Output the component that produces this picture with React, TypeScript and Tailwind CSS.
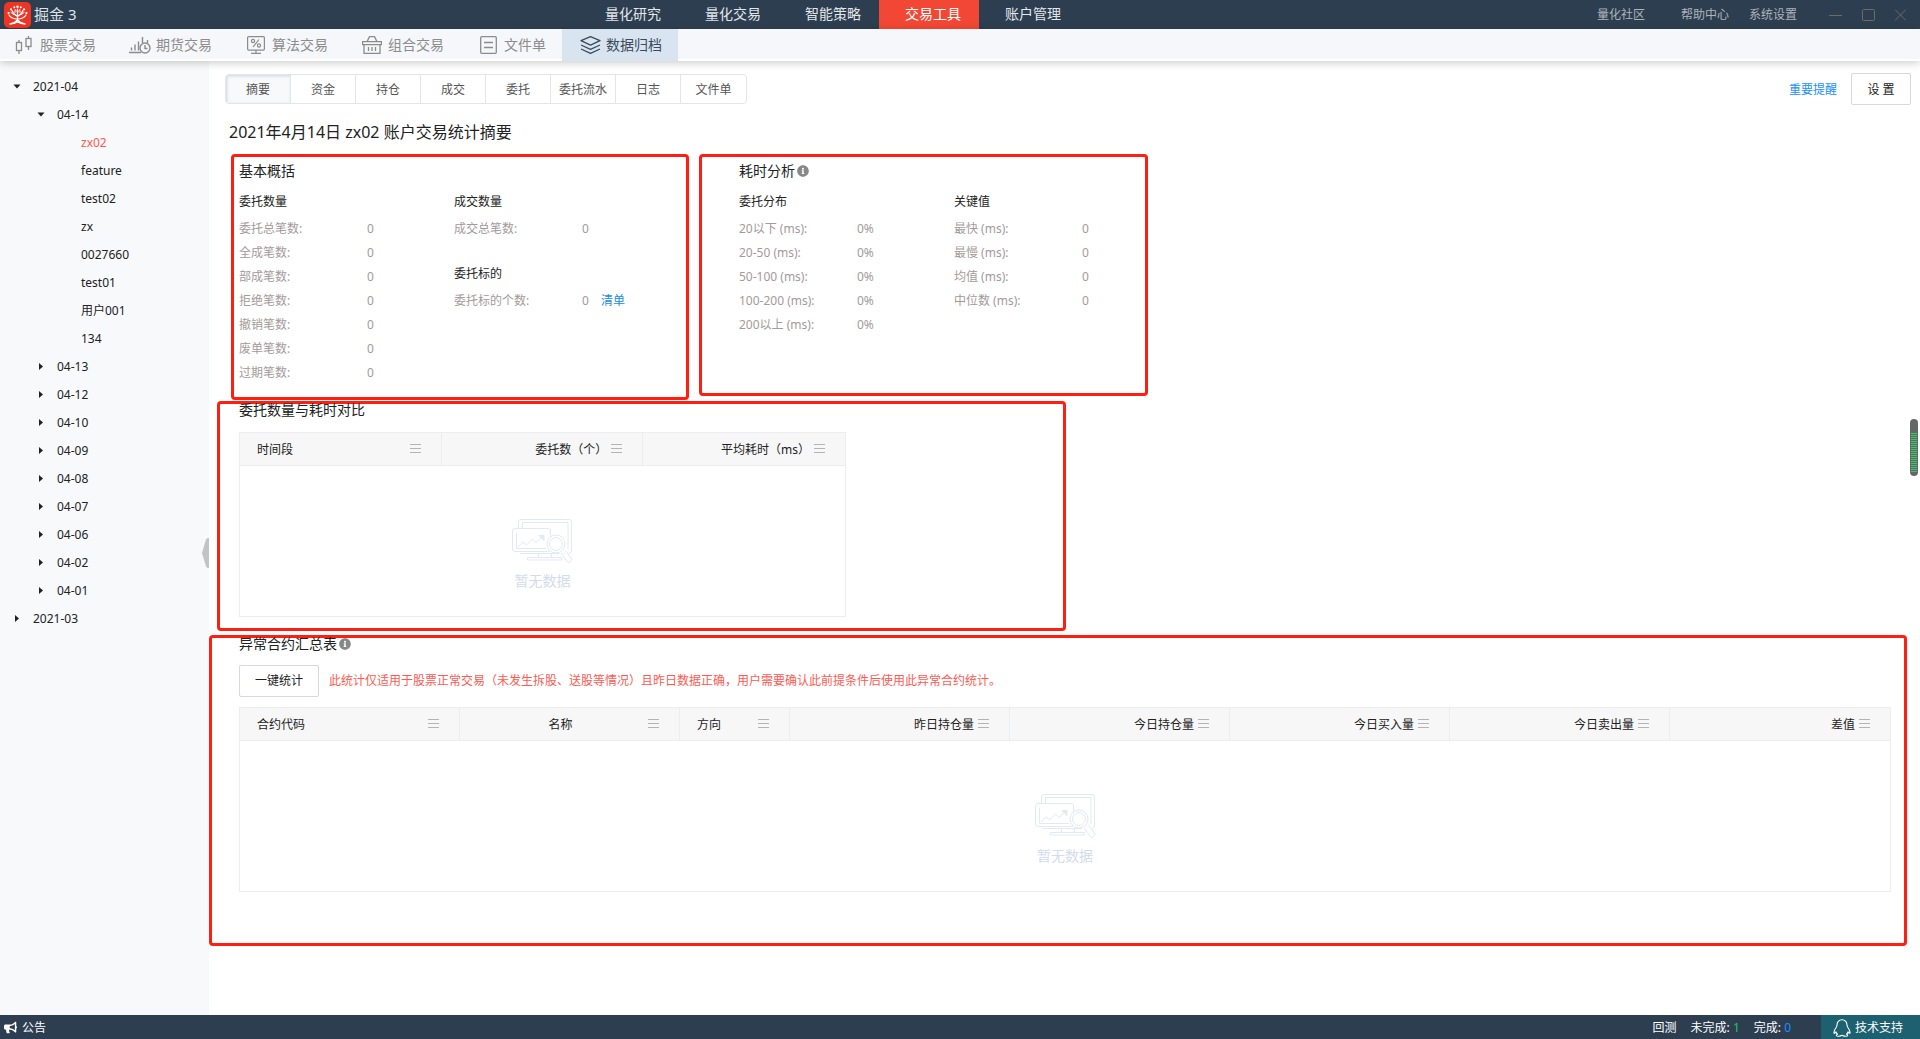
import { useState, type ReactNode } from "react";
import { FaBullhorn, FaInfoCircle } from "react-icons/fa";

// Datos

const MAIN_NAV = ["量化研究", "量化交易", "智能策略", "交易工具", "账户管理"];

const TABS = ["摘要", "资金", "持仓", "成交", "委托", "委托流水", "日志", "文件单"];

interface TreeNode {
  label: string;
  depth: number;
  state?: "open" | "closed";
  selected?: boolean;
}

const TREE: TreeNode[] = [
  { label: "2021-04", depth: 0, state: "open" },
  { label: "04-14", depth: 1, state: "open" },
  { label: "zx02", depth: 2, selected: true },
  { label: "feature", depth: 2 },
  { label: "test02", depth: 2 },
  { label: "zx", depth: 2 },
  { label: "0027660", depth: 2 },
  { label: "test01", depth: 2 },
  { label: "用户001", depth: 2 },
  { label: "134", depth: 2 },
  { label: "04-13", depth: 1, state: "closed" },
  { label: "04-12", depth: 1, state: "closed" },
  { label: "04-10", depth: 1, state: "closed" },
  { label: "04-09", depth: 1, state: "closed" },
  { label: "04-08", depth: 1, state: "closed" },
  { label: "04-07", depth: 1, state: "closed" },
  { label: "04-06", depth: 1, state: "closed" },
  { label: "04-02", depth: 1, state: "closed" },
  { label: "04-01", depth: 1, state: "closed" },
  { label: "2021-03", depth: 0, state: "closed" },
];

const TREE_INDENT = ["pl-[11px]", "pl-[35px]", "pl-[59px]"];

const ORDER_COUNTS = [
  "委托总笔数:",
  "全成笔数:",
  "部成笔数:",
  "拒绝笔数:",
  "撤销笔数:",
  "废单笔数:",
  "过期笔数:",
];

const LATENCY_BUCKETS = [
  "20以下 (ms):",
  "20-50 (ms):",
  "50-100 (ms):",
  "100-200 (ms):",
  "200以上 (ms):",
];

const KEY_VALUES = ["最快 (ms):", "最慢 (ms):", "均值 (ms):", "中位数 (ms):"];

interface Column {
  label: string;
  width: string;
  align: string;
}

const COMPARE_COLUMNS: Column[] = [
  { label: "时间段", width: "w-1/3", align: "text-left" },
  { label: "委托数（个）", width: "w-1/3", align: "text-right" },
  { label: "平均耗时（ms）", width: "w-1/3", align: "text-right" },
];

const ABNORMAL_COLUMNS: Column[] = [
  { label: "合约代码", width: "w-2/15", align: "text-left" },
  { label: "名称", width: "w-2/15", align: "text-center" },
  { label: "方向", width: "w-1/15", align: "text-left" },
  { label: "昨日持仓量", width: "w-2/15", align: "text-right" },
  { label: "今日持仓量", width: "w-2/15", align: "text-right" },
  { label: "今日买入量", width: "w-2/15", align: "text-right" },
  { label: "今日卖出量", width: "w-2/15", align: "text-right" },
  { label: "差值", width: "w-2/15", align: "text-right" },
];

// Iconos

function Logo() {
  return (
    <svg width="27" height="26" viewBox="0 0 27 26" fill="none" stroke="#fff" strokeLinecap="round">
      <rect width="27" height="26" rx="5" fill="#ee3524" stroke="none" />
      <path d="M13.500 7v11M13.500 17C10 17 6.500 15.500 5 13M13.500 17c3.500 0 7-1.500 8.500-4M13.500 14.500C10.500 13 8.800 11 8 8.500M13.500 14.500c3-1.500 4.700-3.500 5.500-6" strokeWidth="1.200" />
      <path d="M9.500 12.500 7 10.500M17.500 12.500l2.500-2M11 10.500l.2-3M16 10.500l-.2-3M13.500 10l-1.500-1.500M13.500 10l1.500-1.500" strokeWidth="0.900" />
      <path d="M6 22c3-.5 5.500-1.500 7.500-4 2 2.500 4.500 3.500 7.500 4M10 21.500l3.500-1.500 3.500 1.500" strokeWidth="1.300" />
      <g fill="#fff" stroke="none">
        <circle cx="13.500" cy="4.800" r="1.200" />
        <circle cx="10.300" cy="5.300" r="1" />
        <circle cx="16.700" cy="5.300" r="1" />
        <circle cx="7" cy="7.300" r="1.100" />
        <circle cx="20" cy="7.300" r="1.100" />
        <circle cx="4.600" cy="11" r="1.100" />
        <circle cx="22.400" cy="11" r="1.100" />
      </g>
    </svg>
  );
}

function CandleIcon() {
  return (
    <svg width="18" height="18" viewBox="0 0 18 18" fill="none" stroke="currentColor" strokeWidth="1.300">
      <rect x="1.500" y="6.500" width="5" height="8" />
      <path d="M4 4v2.500M4 14.500V18M13.500 0v2.500M13.500 10.500V14" />
      <rect x="11" y="2.500" width="5" height="8" />
    </svg>
  );
}

function FuturesIcon() {
  return (
    <svg width="22" height="18" viewBox="0 0 22 18" fill="none" stroke="currentColor" strokeWidth="1.400">
      <path d="M0 16.500h12M2.500 11.500v3M6 8.500v6M9.500 5.500v9M13.500 1v6" />
      <circle cx="16" cy="12" r="5" />
      <path d="M16 9v3.500h2.500M18.500 4v3.500" />
    </svg>
  );
}

function AlgoIcon() {
  return (
    <svg width="18" height="18" viewBox="0 0 18 18" fill="none" stroke="currentColor" strokeWidth="1.200">
      <rect x="0.600" y="0.600" width="16.800" height="13.500" rx="1" />
      <circle cx="6" cy="5" r="1.600" />
      <circle cx="12" cy="9.500" r="1.600" />
      <path d="m12 3.500-6 7.500M9 14v3M4 17.300h10" />
    </svg>
  );
}

function BasketIcon() {
  return (
    <svg width="20" height="18" viewBox="0 0 20 18" fill="none" stroke="currentColor" strokeWidth="1.300">
      <path d="M.6 5.600h18.800v3H.6zM2 8.600v8.700h16V8.600M5 5.600 7.500.7h5L15 5.600M6.500 11v4M10 11v4M13.500 11v4" />
    </svg>
  );
}

function FileIcon() {
  return (
    <svg width="17" height="18" viewBox="0 0 17 18" fill="none" stroke="currentColor" strokeWidth="1.300">
      <rect x="0.700" y="0.700" width="15.600" height="16.600" rx="1" />
      <path d="M4 6.500h9M4 11.500h9" />
    </svg>
  );
}

function LayersIcon() {
  return (
    <svg width="21" height="18" viewBox="0 0 21 18" fill="none" stroke="currentColor" strokeWidth="1.300" strokeLinejoin="round">
      <path d="m10.500.7 9.500 4-9.500 4.500L1 4.700zM1 9l9.500 4.300L20 9M1 13l9.500 4.300L20 13" />
    </svg>
  );
}

function PenguinIcon() {
  return (
    <svg width="18" height="18" viewBox="0 0 18 18" fill="none" stroke="currentColor" strokeWidth="1.100" strokeLinejoin="round">
      <path d="M9 .8C5.800.8 4 3 4 6c0 1-.3 1.600-.9 2.500C1.800 10.300.9 12 .9 13.600c0 1.100.8 1.100 2.100-.7.300 1 .8 1.700 1.500 2.300-1 .4-1.300.9-1.100 1.400.3.900 4 .8 5.600-.3 1.600 1.100 5.300 1.200 5.600.3.200-.5-.1-1-1.100-1.400.7-.6 1.200-1.300 1.500-2.300 1.300 1.800 2.100 1.800 2.100.7 0-1.600-.9-3.300-2.200-5.100C14.300 7.600 14 7 14 6c0-3-1.800-5.200-5-5.200z" />
    </svg>
  );
}

function MenuIcon() {
  return (
    <svg className="mb-[2px] shrink-0" width="11" height="9" viewBox="0 0 11 9" fill="#b4b4b4">
      <path d="M0 0h11v1H0zM0 4h11v1H0zM0 8h11v1H0z" />
    </svg>
  );
}

function EmptyIcon() {
  return (
    <svg width="61" height="44" viewBox="0 0 61 44" fill="none" stroke="#e3e9f2">
      <path d="M6.500 9V3a2.500 2.500 0 0 1 2.500-2.500h48A2.500 2.500 0 0 1 59.500 3v29a2.500 2.500 0 0 1-2.500 2.500" />
      <path d="M10.500 9V3.500h45.500V30M8 34.500h39" />
      <rect x="0.500" y="9.500" width="38" height="23" rx="2.500" />
      <path d="M4.500 14v15.500H34M6 28l5-5 3.500 3 6-6 3.500 3.500 7-6.500" />
      <path d="M27 16.500h5v5z" fill="#e3e9f2" />
      <circle cx="44" cy="25" r="9" fill="#fff" />
      <circle cx="44" cy="25" r="6.500" />
      <path d="m49 34 6.500 9 2 .5 2.500-3.500-6.500-8.500M26.500 34.500v4M39.500 34.500v4M15.500 38.500h34v2.500h-34z" />
    </svg>
  );
}

const TOOLS: { label: string; icon: ReactNode; active?: boolean }[] = [
  { label: "股票交易", icon: <CandleIcon /> },
  { label: "期货交易", icon: <FuturesIcon /> },
  { label: "算法交易", icon: <AlgoIcon /> },
  { label: "组合交易", icon: <BasketIcon /> },
  { label: "文件单", icon: <FileIcon /> },
  { label: "数据归档", icon: <LayersIcon />, active: true },
];

// Cabecera

function Header() {
  return (
    <header className="flex h-[29px] shrink-0 items-center bg-[#2d3e50] text-sm text-[#e3e6ea]">
      <div className="flex w-[579px] shrink-0 items-center gap-[3px] pl-1 text-[15px] text-[#dfe3e7]">
        <Logo />
        <span>掘金 3</span>
      </div>
      <nav className="flex h-full">
        {MAIN_NAV.map((item) => (
          <button
            key={item}
            type="button"
            className={
              item === "交易工具"
                ? "w-[100px] bg-[#f24734] pb-[2px] pl-2 text-white"
                : "w-[100px] pb-[2px] pl-2"
            }
          >
            {item}
          </button>
        ))}
      </nav>
      <div className="ml-auto flex items-center pr-[14px] text-xs text-[#adb4bb]">
        <a href="#community" className="mr-9">量化社区</a>
        <a href="#help" className="mr-5">帮助中心</a>
        <a href="#settings" className="mr-8">系统设置</a>
        <div className="flex items-center gap-5 text-[#6b6b6b]">
          <button type="button" aria-label="minimize">
            <svg width="13" height="12" viewBox="0 0 13 12" stroke="currentColor">
              <path d="M0 6.500h13" />
            </svg>
          </button>
          <button type="button" aria-label="maximize">
            <svg width="13" height="12" viewBox="0 0 13 12" fill="none" stroke="currentColor">
              <rect x="0.500" y="0.500" width="12" height="11" rx="1" />
            </svg>
          </button>
          <button type="button" aria-label="close">
            <svg width="11" height="12" viewBox="0 0 11 12" stroke="currentColor">
              <path d="m0 .5 11 11M11 .5l-11 11" />
            </svg>
          </button>
        </div>
      </div>
    </header>
  );
}

function Toolbar() {
  return (
    <nav className="relative z-10 flex h-8 shrink-0 bg-[#f6f7fa] text-sm text-[#8c8c8c] shadow-[inset_0_-2px_0_#fff,0_2px_8px_rgba(0,0,0,0.2)]">
      {TOOLS.map((tool) => (
        <button
          key={tool.label}
          type="button"
          className={
            tool.active
              ? "flex items-center gap-1 bg-[#d8e4f0] px-4 text-[#3b4a5c]"
              : "flex items-center gap-1 px-4 first:pl-3"
          }
        >
          <span className="flex w-6 justify-center">{tool.icon}</span>
          {tool.label}
        </button>
      ))}
    </nav>
  );
}

function Sidebar() {
  return (
    <aside className="relative w-[209px] shrink-0 bg-[#f7f9fb] pt-3 text-xs text-[#222]">
      <ul>
        {TREE.map((node) => (
          <li key={node.label}>
            <button
              type="button"
              className={`flex h-7 w-full items-center gap-[10px] text-left ${TREE_INDENT[node.depth]} ${
                node.selected ? "text-[#ff5a52]" : ""
              }`}
            >
              <svg width="12" height="8" viewBox="0 0 12 8" fill="#222">
                {node.state === "open" && <path d="M2.500 1.500h7L6 5.500z" />}
                {node.state === "closed" && <path d="M4 0 8 3.500 4 7z" />}
              </svg>
              {node.label}
            </button>
          </li>
        ))}
      </ul>
      <button type="button" aria-label="collapse" className="absolute top-1/2 right-0">
        <svg width="7" height="30" viewBox="0 0 7 30" fill="#c3c3c3">
          <path d="M7 0H5.500L4 1.500 0 15l4 13.500L5.500 30H7z" />
        </svg>
      </button>
    </aside>
  );
}

// Bloques del resumen

interface StatListProps {
  title: string;
  labels: string[];
  value: string;
  labelWidth?: string;
  extra?: ReactNode;
}

function StatList({ title, labels, value, labelWidth = "w-32", extra }: StatListProps) {
  return (
    <div>
      <h3 className="mb-[2px] leading-[26px] text-[#222]">{title}</h3>
      <dl className="text-[#a39a9a]">
        {labels.map((label) => (
          <div key={label} className="flex h-6 items-center">
            <dt className={labelWidth}>{label}</dt>
            <dd>{value}</dd>
            {extra}
          </div>
        ))}
      </dl>
    </div>
  );
}

function EmptyTable({ columns }: { columns: Column[] }) {
  return (
    <div className="border border-[#ebedf0]">
      <table className="w-full table-fixed border-separate border-spacing-0 text-xs">
        <thead>
          <tr className="h-[33px] bg-[#f7f7f7]">
            {columns.map((col) => (
              <th
                key={col.label}
                className={`border-r border-b border-[#ebedf0] p-0 font-normal text-[#222] last:border-r-0 ${col.width}`}
              >
                <div className="flex items-center gap-1 pr-5 pl-[17px]">
                  <span className={`flex-1 pt-[2px] whitespace-nowrap ${col.align}`}>{col.label}</span>
                  <MenuIcon />
                </div>
              </th>
            ))}
          </tr>
        </thead>
        <tbody>
          <tr>
            <td colSpan={columns.length} className="h-[150px] p-0 pt-7">
              <div className="flex flex-col items-center gap-2 text-sm text-[#d3dbec]">
                <EmptyIcon />
                暂无数据
              </div>
            </td>
          </tr>
        </tbody>
      </table>
    </div>
  );
}

function SectionTitle({ children, info }: { children: string; info?: boolean }) {
  return (
    <h2 className="flex items-center gap-[2px] text-sm leading-3 text-[#222]">
      {children}
      {info && <FaInfoCircle className="text-xs text-[#888]" />}
    </h2>
  );
}

function Summary() {
  return (
    <div className="text-xs">
      <div className="flex items-start gap-[10px] pl-[22px]">
        <section className="w-[458px] rounded border-3 border-[#ff1e12] pt-2 pb-3 pl-[5px]">
          <SectionTitle>基本概括</SectionTitle>
          <div className="mt-3 flex">
            <div className="w-[215px]">
              <StatList title="委托数量" labels={ORDER_COUNTS} value="0" />
            </div>
            <div className="flex flex-col gap-5">
              <StatList title="成交数量" labels={["成交总笔数:"]} value="0" />
              <StatList
                title="委托标的"
                labels={["委托标的个数:"]}
                value="0"
                extra={<dd className="ml-3"><a href="#list" className="text-[#1a8de0]">清单</a></dd>}
              />
            </div>
          </div>
        </section>
        <section className="w-[449px] rounded border-3 border-[#ff1e12] pt-2 pb-14 pl-[37px]">
          <SectionTitle info>耗时分析</SectionTitle>
          <div className="mt-3 flex">
            <div className="w-[215px]">
              <StatList title="委托分布" labels={LATENCY_BUCKETS} value="0%" labelWidth="w-[118px]" />
            </div>
            <StatList title="关键值" labels={KEY_VALUES} value="0" />
          </div>
        </section>
      </div>

      <section className="mt-px ml-2 w-[849px] rounded border-3 border-[#ff1e12] pb-[11px] pl-[19px]">
        <SectionTitle>委托数量与耗时对比</SectionTitle>
        <div className="mt-4 w-[607px]">
          <EmptyTable columns={COMPARE_COLUMNS} />
        </div>
      </section>

      <section className="mt-1 mr-[13px] rounded border-3 border-[#ff1e12] pr-[13px] pb-[51px] pl-[27px]">
        <SectionTitle info>异常合约汇总表</SectionTitle>
        <div className="mt-[15px] mb-[10px] flex items-center gap-[10px]">
          <button type="button" className="h-8 w-20 rounded-xs border border-[#d9d9d9] text-[#222]">
            一键统计
          </button>
          <p className="text-[#ff5a52]">
            此统计仅适用于股票正常交易（未发生拆股、送股等情况）且昨日数据正确，用户需要确认此前提条件后使用此异常合约统计。
          </p>
        </div>
        <EmptyTable columns={ABNORMAL_COLUMNS} />
      </section>
    </div>
  );
}

function Footer() {
  return (
    <footer className="flex h-6 shrink-0 items-center bg-[#2d3e50] text-xs text-white">
      <button type="button" className="flex items-center gap-[5px] pt-px pl-1">
        <FaBullhorn className="text-[13px]" />
        公告
      </button>
      <div className="ml-auto flex gap-[14px] pt-px pr-[30px]">
        <span>回测</span>
        <span>
          未完成: <span className="text-[#22c55e]">1</span>
        </span>
        <span>
          完成: <span className="text-[#1890ff]">0</span>
        </span>
      </div>
      <button type="button" className="flex h-full w-[99px] items-center gap-1 bg-[#1d6170] pt-px pl-3">
        <PenguinIcon />
        技术支持
      </button>
    </footer>
  );
}

export default function App() {
  const [tab, setTab] = useState("摘要");

  return (
    <div className="relative flex h-screen flex-col bg-white font-['Noto_Sans','Noto_Sans_CJK_SC',sans-serif]">
      <Header />
      <Toolbar />
      <div className="relative flex min-h-0 flex-1">
        <Sidebar />
        <main className="min-w-0 flex-1 pt-3">
          <div className="flex items-center pr-[9px] pl-4 text-xs">
            <div className="flex h-[30px] overflow-hidden rounded border border-[#e2e6ea]">
              {TABS.map((item) => (
                <button
                  key={item}
                  type="button"
                  onClick={() => setTab(item)}
                  className={`w-[65px] border-r border-[#e2e6ea] pt-[2px] text-[#555] last:border-r-0 ${
                    item === tab ? "bg-[#f7f9fb] shadow-[inset_1px_1px_3px_#ccd5dd]" : ""
                  }`}
                >
                  {item}
                </button>
              ))}
            </div>
            <a href="#notice" className="mr-[14px] ml-auto pt-[2px] text-[#1890ff]">重要提醒</a>
            <button type="button" className="h-8 w-[60px] rounded-xs border border-[#d9d9d9] pt-[2px] text-[#222]">
              设 置
            </button>
          </div>
          <h1 className="mt-[15px] mb-[10px] pl-5 text-base text-[#222]">
            2021年4月14日 zx02 账户交易统计摘要
          </h1>
          <Summary />
        </main>
        {/* Indicador lateral */}
        <div className="absolute top-3/8 right-[2px] h-[57px] w-2 rounded-full bg-[#666] px-px pt-[14px] pb-1">
          <div className="h-full bg-[repeating-linear-gradient(#3fc46d_0_1px,#5a6b60_1px_2px)]" />
        </div>
      </div>
      <Footer />
    </div>
  );
}
